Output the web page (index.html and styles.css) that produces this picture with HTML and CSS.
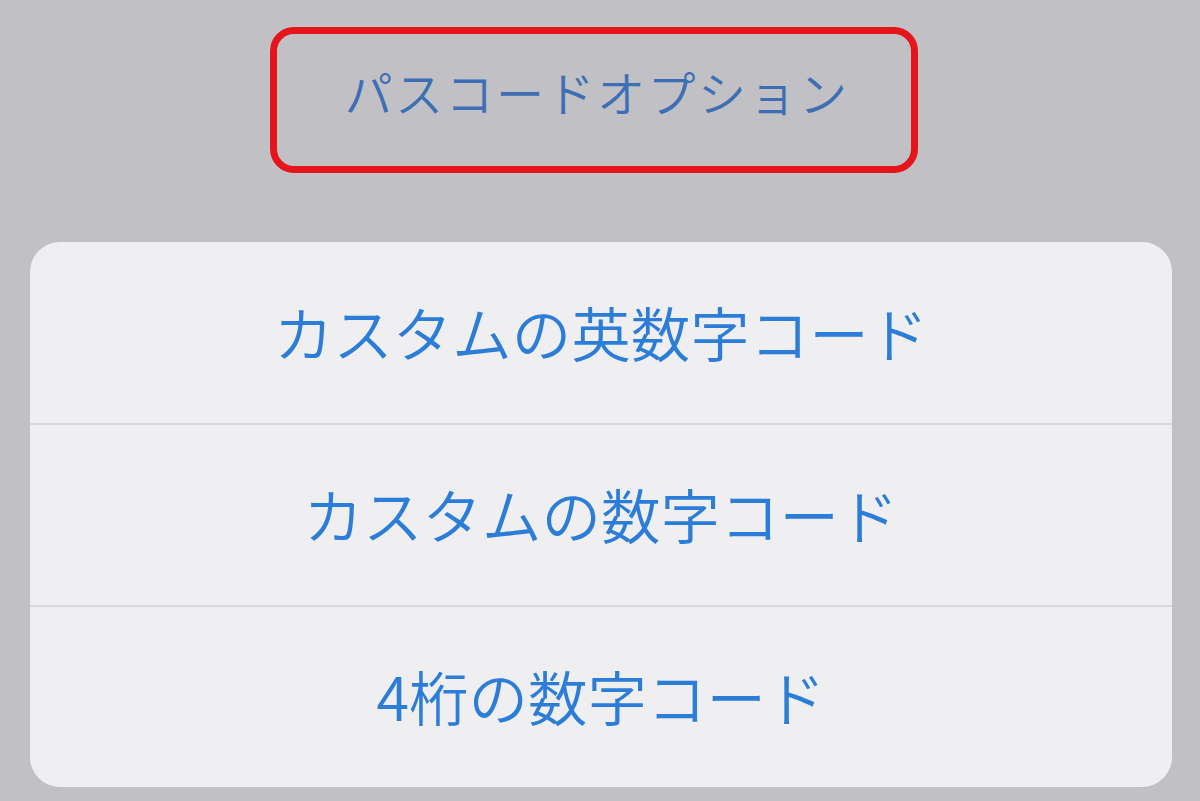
FILE: index.html
```html
<!DOCTYPE html>
<html lang="ja">
<head>
  <meta charset="UTF-8">
  <meta name="viewport" content="width=device-width, initial-scale=1.0">
  <title>パスコードオプション</title>
  <link rel="stylesheet" href="styles.css">
</head>
<body>

  <div class="screen">
    <div class="header">
      <div class="highlight">
        <span class="options-title">パスコードオプション</span>
      </div>
    </div>

    <div class="sheet">
      <div class="sheet-row">カスタムの英数字コード</div>
      <div class="sheet-row">カスタムの数字コード</div>
      <div class="sheet-row">4桁の数字コード</div>
    </div>
  </div>

</body>
</html>
```

FILE: styles.css
```css
* {
  margin: 0;
  padding: 0;
  box-sizing: border-box;
}

body {
  font-family: "Noto Sans CJK JP", "Noto Sans", sans-serif;
  background-color: #c1c0c5;
  width: 1200px;
  height: 801px;
  overflow: hidden;
}

.screen {
  display: flex;
  flex-direction: column;
  padding: 27px 28px 0 30px;
}

.header {
  display: flex;
  justify-content: center;
  padding-right: 14px;
}

.highlight {
  width: 648px;
  height: 146px;
  border: 7px solid #e5161b;
  border-radius: 24px;
  display: flex;
  justify-content: center;
  align-items: center;
  padding-bottom: 18px;
  padding-left: 6px;
}

.options-title {
  font-size: 48px;
  font-weight: 350;
  letter-spacing: 2.5px;
  color: #3d6fb4;
}

.sheet {
  margin-top: 69px;
  background-color: #efeff2;
  border-radius: 30px;
  display: flex;
  flex-direction: column;
  overflow: hidden;
}

.sheet-row {
  height: 182px;
  display: flex;
  justify-content: center;
  align-items: center;
  font-size: 59.5px;
  font-weight: 350;
  color: #2c7dd8;
  border-top: 2px solid #d8d8dc;
  padding-bottom: 4px;
}

.sheet-row:first-child {
  border-top: none;
  height: 181px;
}
```
